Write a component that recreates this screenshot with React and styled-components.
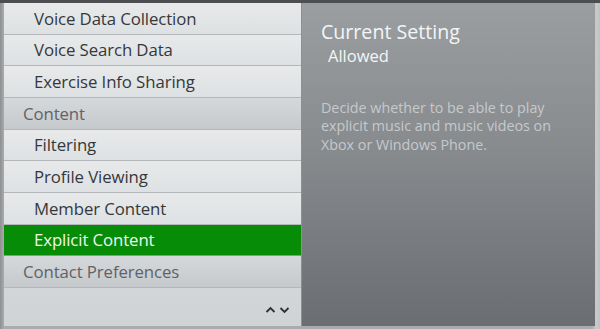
import React from "react";
import styled, { createGlobalStyle } from "styled-components";

const Global = createGlobalStyle`
  html, body { margin: 0; padding: 0; background: #7d7f81; }
  body { font-family: "Open Sans", "Noto Sans", sans-serif; }
`;

const Frame = styled.div`
  width: 600px;
  height: 329px;
  box-sizing: border-box;
  padding: 3px 5px 3px 4px;
  display: flex;
  background: linear-gradient(90deg, #8d8f91 0px, #a9abad 4px, #a9abad 592px, #c9cbcd 596px, #bfc1c3 600px);
  position: relative;
  &::before {
    content: "";
    position: absolute;
    left: 0; right: 0; top: 0; height: 3px;
    background: #4d4e50;
  }
`;

const List = styled.div`
  width: 297px;
  display: flex;
  flex-direction: column;
  background: #d5d8da;
`;

const Row = styled.div`
  height: 31.67px;
  box-sizing: border-box;
  flex: none;
  display: flex;
  align-items: center;
  padding-left: ${(p) => (p.$header ? "19px" : "30px")};
  font-size: 16.8px;
  letter-spacing: -0.1px;
  border-bottom: 1px solid ${(p) => (p.$selected ? "#5cb85c" : "#b3b7ba")};
  color: ${(p) => (p.$selected ? "#eef8ee" : p.$header ? "#5f6366" : "#35383a")};
  background: ${(p) =>
    p.$selected
      ? "#078c08"
      : p.$header
      ? "linear-gradient(180deg, #d6d9db 0%, #c6c9cc 100%)"
      : "linear-gradient(180deg, #e7e9ea 0%, #dee1e3 100%)"};
`;

const Footer = styled.div`
  flex: 1;
  display: flex;
  justify-content: flex-end;
  align-items: flex-end;
  padding: 0 11px 12px 0;
  background: linear-gradient(180deg, #d3d6d8 0%, #d0d3d5 100%);
`;

const Arrows = styled.div`
  display: flex;
  gap: 3px;
  color: #2e3133;
`;

const Detail = styled.div`
  flex: 1;
  border-left: 1px solid #8c9094;
  background: linear-gradient(180deg, #9a9ea1 0%, #878b8e 45%, #6a6e72 100%);
  padding: 16px 0 0 19px;
  display: flex;
  flex-direction: column;
`;

const Title = styled.div`
  font-size: 19.6px;
  color: #f4f5f5;
  line-height: 26px;
`;

const Value = styled.div`
  font-size: 16.5px;
  color: #f4f5f5;
  padding-left: 7px;
  line-height: 22px;
`;

const Desc = styled.div`
  margin-top: 32px;
  font-size: 14.3px;
  line-height: 18.3px;
  color: #c6c9cc;
  width: 248px;
`;

const Chevron = ({ up }) => (
  <svg width="11" height="8" viewBox="0 0 11 8">
    <path
      d={up ? "M1.5 6 L5.5 2 L9.5 6" : "M1.5 2 L5.5 6 L9.5 2"}
      fill="none"
      stroke="currentColor"
      strokeWidth="1.8"
    />
  </svg>
);

const items = [
  { label: "Voice Data Collection" },
  { label: "Voice Search Data" },
  { label: "Exercise Info Sharing" },
  { label: "Content", header: true },
  { label: "Filtering" },
  { label: "Profile Viewing" },
  { label: "Member Content" },
  { label: "Explicit Content", selected: true },
  { label: "Contact Preferences", header: true },
];

export default function App() {
  return (
    <>
      <Global />
      <Frame>
        <List>
          {items.map((it) => (
            <Row key={it.label} $header={it.header} $selected={it.selected}>
              {it.label}
            </Row>
          ))}
          <Footer>
            <Arrows>
              <Chevron up />
              <Chevron />
            </Arrows>
          </Footer>
        </List>
        <Detail>
          <Title>Current Setting</Title>
          <Value>Allowed</Value>
          <Desc>
            Decide whether to be able to play explicit music and music videos on
            Xbox or Windows Phone.
          </Desc>
        </Detail>
      </Frame>
    </>
  );
}
